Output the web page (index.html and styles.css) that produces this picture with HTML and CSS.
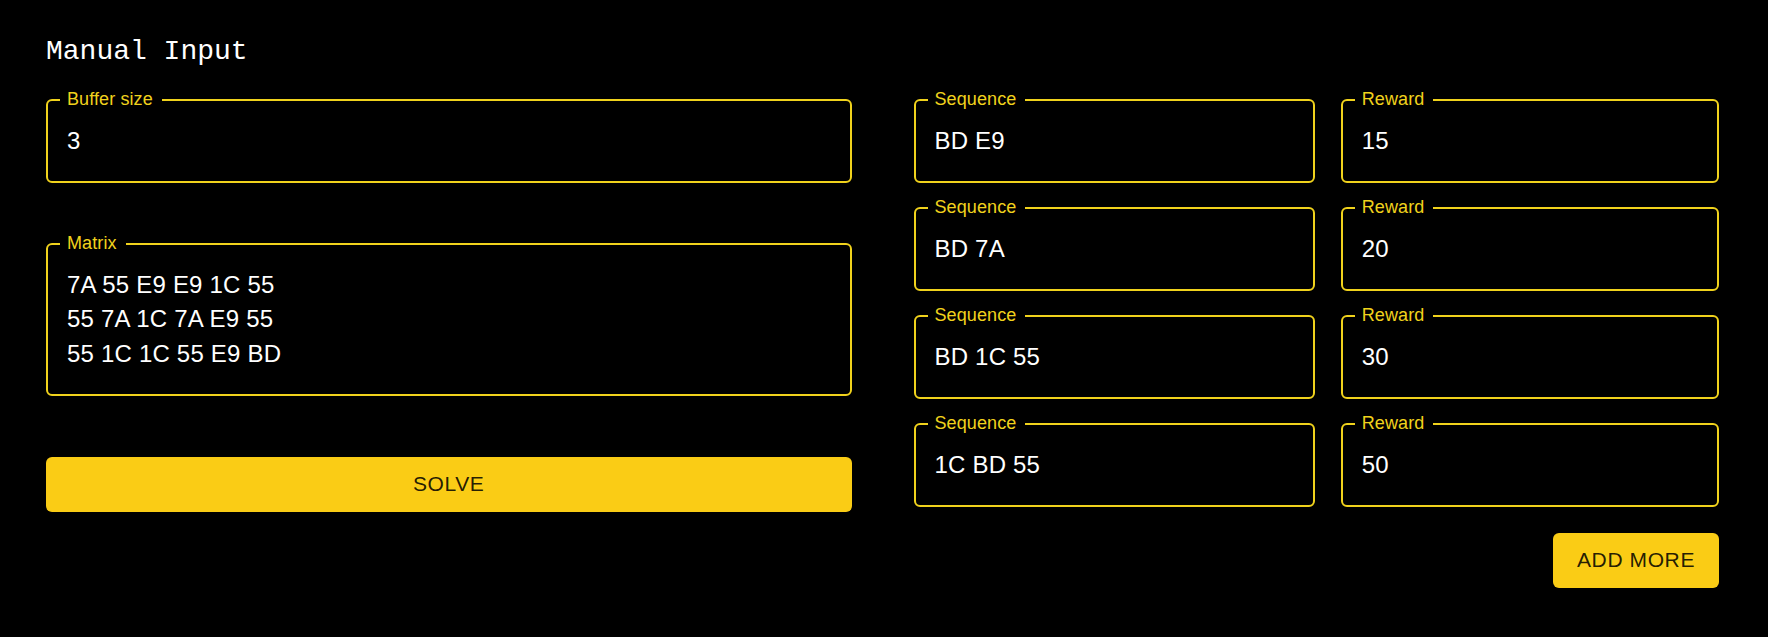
FILE: index.html
```html
<!DOCTYPE html>
<html lang="en">
<head>
<meta charset="utf-8">
<title>Manual Input</title>
<link rel="stylesheet" href="styles.css">
</head>
<body>
<main class="page">
  <h1 class="title">Manual Input</h1>
  <div class="columns">
    <section class="left">
      <fieldset class="field">
        <legend class="field-label">Buffer size</legend>
        <input class="field-input" type="text" value="3">
      </fieldset>
      <fieldset class="field field-matrix">
        <legend class="field-label">Matrix</legend>
        <textarea class="field-input field-area" rows="3">7A 55 E9 E9 1C 55
55 7A 1C 7A E9 55
55 1C 1C 55 E9 BD</textarea>
      </fieldset>
      <button class="btn btn-block" type="button">Solve</button>
    </section>
    <section class="right">
      <div class="seq-grid">
        <fieldset class="field">
          <legend class="field-label">Sequence</legend>
          <input class="field-input" type="text" value="BD E9">
        </fieldset>
        <fieldset class="field">
          <legend class="field-label">Reward</legend>
          <input class="field-input" type="text" value="15">
        </fieldset>
        <fieldset class="field">
          <legend class="field-label">Sequence</legend>
          <input class="field-input" type="text" value="BD 7A">
        </fieldset>
        <fieldset class="field">
          <legend class="field-label">Reward</legend>
          <input class="field-input" type="text" value="20">
        </fieldset>
        <fieldset class="field">
          <legend class="field-label">Sequence</legend>
          <input class="field-input" type="text" value="BD 1C 55">
        </fieldset>
        <fieldset class="field">
          <legend class="field-label">Reward</legend>
          <input class="field-input" type="text" value="30">
        </fieldset>
        <fieldset class="field">
          <legend class="field-label">Sequence</legend>
          <input class="field-input" type="text" value="1C BD 55">
        </fieldset>
        <fieldset class="field">
          <legend class="field-label">Reward</legend>
          <input class="field-input" type="text" value="50">
        </fieldset>
      </div>
      <div class="actions">
        <button class="btn" type="button">Add more</button>
      </div>
    </section>
  </div>
</main>
</body>
</html>
```

FILE: styles.css
```css
html, body {
  margin: 0;
  padding: 0;
  background: #000;
}

body {
  font-family: "Liberation Sans", Arial, sans-serif;
  color: #fff;
}

.page {
  padding: 35px 49px 40px 46px;
}

.title {
  margin: 0 0 20px;
  font-family: "Liberation Mono", "DejaVu Sans Mono", monospace;
  font-size: 28px;
  line-height: 34px;
  font-weight: normal;
  color: #fff;
}

.columns {
  display: grid;
  grid-template-columns: 1fr 1fr;
  column-gap: 62px;
  align-items: start;
}

.left {
  display: flex;
  flex-direction: column;
}

.field {
  margin: 0;
  min-width: 0;
  border: 2px solid #f0d21c;
  border-radius: 6px;
  padding: 12.75px 12px 22.75px 12px;
}

.field-label {
  padding: 0 9px 2px 7px;
  font-size: 18px;
  line-height: 20px;
  letter-spacing: 0.1px;
  color: #f0d21c;
}

.field-input {
  display: block;
  box-sizing: border-box;
  width: 100%;
  height: 34.5px;
  margin: 0;
  padding: 0 7px;
  border: 0;
  outline: none;
  background: transparent;
  color: #fff;
  font-family: "Liberation Sans", Arial, sans-serif;
  font-size: 24px;
  line-height: 34.5px;
  letter-spacing: 0.2px;
}

.field-matrix {
  margin-top: 50px;
}

.field-area {
  height: 103.5px;
  resize: none;
  overflow: hidden;
}

.btn {
  box-sizing: border-box;
  height: 54.75px;
  padding: 9px 24px;
  border: 0;
  border-radius: 6px;
  background: #facc15;
  color: rgba(0, 0, 0, 0.87);
  font-family: "Liberation Sans", Arial, sans-serif;
  font-size: 21px;
  line-height: 36.75px;
  letter-spacing: 0.6px;
  text-transform: uppercase;
  cursor: pointer;
}

.btn-block {
  width: 100%;
  margin-top: 61px;
}

.seq-grid {
  display: grid;
  grid-template-columns: 401fr 378fr;
  column-gap: 26px;
  row-gap: 14px;
}

.actions {
  display: flex;
  justify-content: flex-end;
  margin-top: 26px;
}
```
